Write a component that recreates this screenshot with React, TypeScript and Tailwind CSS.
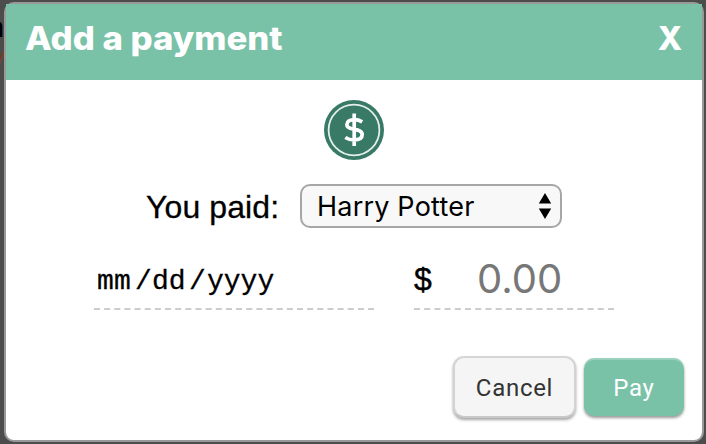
import React from "react";

function CoinIcon() {
  return (
    <svg viewBox="0 0 60 60" className="block size-[60px]" role="img" aria-label="Dollar coin">
      <circle cx="30" cy="30" r="30" fill="#387a66" />
      <circle cx="30" cy="30" r="25.4" fill="none" stroke="#e4efeb" strokeWidth="1.8" />
      <path
        d="M38.2 21.8C35.5 20.2 33 19.6 30.3 19.6C26 19.6 22.9 21.3 22.9 24.4C22.9 31.2 38.2 27.3 38.2 34.6C38.2 38.4 34.6 40 30 40C26.8 40 24 39.2 21.3 37.5M30.2 13.5V46"
        fill="none"
        stroke="white"
        strokeWidth="3.7"
      />
    </svg>
  );
}

function SelectArrows() {
  return (
    <svg viewBox="0 0 14 26" className="h-[26px] w-[14px]" aria-hidden="true">
      <path d="M7 0L13.2 10.5H.8ZM7 26L.8 15.5H13.2Z" fill="black" />
    </svg>
  );
}

function DashedLine({ width }: { width: number }) {
  return (
    <svg className="block h-[2px]" width={width} height="2" aria-hidden="true">
      <line x1="0" y1="1" x2={width} y2="1" stroke="#cccccc" strokeWidth="2" strokeDasharray={`6 ${width === 200 ? 4.21 : 4.15}`} />
    </svg>
  );
}

export default function App() {
  return (
    <div className="relative h-[444px] w-[706px] overflow-hidden bg-[#4c4c4c] pt-[2px] pl-[4px] font-['Roboto',sans-serif]">
      <span className="absolute top-[11px] right-[702px] font-['Inter',sans-serif] text-[28px] leading-[32px] font-bold text-black">a</span>
      <span className="absolute top-[43px] right-[702px] font-['Liberation_Sans',sans-serif] text-[22px] leading-[28px] text-[#7a3c24]">y</span>
      <section className="relative flex h-[440px] w-[700px] flex-col rounded-[10px] border-2 border-[#999999] bg-white">
        <header className="flex h-[76px] shrink-0 justify-between bg-[#79c2a8] pr-[20px] pl-[19px] font-['Inter',sans-serif] text-[32px] leading-[40px] font-extrabold text-white">
          <h1 className="origin-left scale-x-[1.085] pt-[15px] whitespace-nowrap">Add a payment</h1>
          <button className="flex items-start pt-[15px]">X</button>
        </header>
        <div className="flex justify-center pt-[20px]">
          <CoinIcon />
        </div>
        <div className="mt-[24px] flex h-[44px] items-center pl-[140px]">
          <label className="w-[154px] pt-[2px] font-['Liberation_Sans',sans-serif] text-[32px] leading-[40px] tracking-[0.1px] whitespace-nowrap text-black [-webkit-text-stroke:0.3px_black]">You paid:</label>
          <button className="flex h-[44px] w-[262px] items-center justify-between rounded-[10px] border-2 border-[#a6a6a6] bg-[#f8f8f8] pr-[8px] pl-[15px] font-['Inter',sans-serif] text-[27px] leading-[32px] tracking-[0.2px] text-black">
            <span className="pt-[2px] whitespace-nowrap">Harry Potter</span>
            <SelectArrows />
          </button>
        </div>
        <div className="mt-[24px] flex gap-[40px] pl-[88px]">
          <div className="w-[280px]">
            <div className="flex h-[56px] items-center pt-[3px] pl-[3px] font-['Liberation_Mono',monospace] text-[28px] text-black [-webkit-text-stroke:0.3px_black]">
              <span className="w-[38px] tracking-[0.2px]">mm</span>
              <span className="w-[17px]">/</span>
              <span className="w-[37px]">dd</span>
              <span className="w-[18px]">/</span>
              <span>yyyy</span>
            </div>
            <DashedLine width={280} />
          </div>
          <div className="w-[200px]">
            <div className="flex h-[56px] items-center pb-[3px]">
              <span className="w-[63px] font-['Liberation_Sans',sans-serif] text-[32px] text-black [-webkit-text-stroke:0.4px_black]">$</span>
              <span className="font-['Inter',sans-serif] text-[40px] leading-[48px] tracking-[0px] text-[#777777]">0.00</span>
            </div>
            <DashedLine width={200} />
          </div>
        </div>
        <footer className="mt-[46px] flex items-start gap-[8px] pl-[447px] text-[24px] leading-[28px] tracking-[0.7px]">
          <button className="h-[62px] w-[123px] rounded-[11px] border-2 border-t-[#d6d6d6] border-r-[#d3d3d3] border-b-[#c8c8c8] border-l-[#d3d3d3] bg-[#f5f5f5] pt-[2px] text-[#333333] shadow-[0_2px_3px_rgba(0,0,0,0.35)]">Cancel</button>
          <button className="mt-[2px] h-[58px] w-[100px] rounded-[10px] bg-[#79c2a8] pt-[2px] text-white shadow-[0_2px_3px_rgba(0,0,0,0.4),inset_0_2px_0_rgba(255,255,255,0.25)]">Pay</button>
        </footer>
      </section>
    </div>
  );
}
